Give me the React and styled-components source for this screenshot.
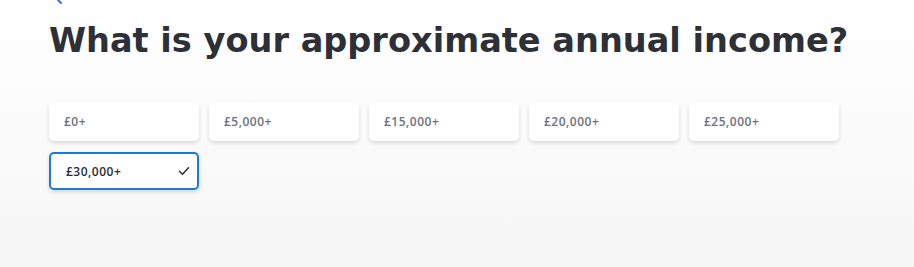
import React from 'react';
import styled, { createGlobalStyle } from 'styled-components';

const GlobalStyle = createGlobalStyle`
  html, body {
    margin: 0;
    padding: 0;
  }
  body {
    background: linear-gradient(180deg, #ffffff 0%, #f6f6f6 100%);
    min-height: 267px;
    font-family: "DejaVu Sans", "Open Sans", sans-serif;
  }
`;

const Page = styled.div`
  position: relative;
  height: 267px;
  padding: 0 49px;
  box-sizing: border-box;
  overflow: hidden;
`;

const BackLink = styled.a`
  position: absolute;
  left: 52px;
  top: -10px;
  color: #3d6af2;
  display: block;
  width: 14px;
  height: 14px;
`;

const Heading = styled.h1`
  margin: 0;
  padding-top: 20px;
  font-size: 33.6px;
  line-height: 42px;
  font-weight: 700;
  color: #2d3036;
  white-space: nowrap;
`;

const Options = styled.div`
  display: grid;
  grid-template-columns: repeat(5, 150px);
  column-gap: 10px;
  row-gap: 11px;
  margin-top: 40px;
`;

const Option = styled.button`
  display: flex;
  align-items: center;
  justify-content: space-between;
  height: ${p => (p.$selected ? '38px' : '39px')};
  padding: 0 ${p => (p.$selected ? '7px' : '9px')} 0 ${p => (p.$selected ? '15px' : '15px')};
  background: #ffffff;
  border: ${p => (p.$selected ? '2px solid #1f78d6' : '0')};
  border-radius: 5px;
  box-shadow: 0 2px 4px rgba(0, 0, 0, 0.14);
  font-family: "Open Sans", sans-serif;
  font-size: 12px;
  letter-spacing: 0.5px;
  font-weight: 600;
  color: ${p => (p.$selected ? '#2a2d33' : '#6d717b')};
  text-align: left;
  cursor: pointer;
`;

const Check = () => (
  <svg width="12" height="10" viewBox="0 0 12 10" fill="none">
    <path d="M1.5 5.2 L4.5 8.2 L10.5 1.8" stroke="#2a2d33" strokeWidth="1.5" strokeLinecap="round" strokeLinejoin="round" />
  </svg>
);

const options = ['£0+', '£5,000+', '£15,000+', '£20,000+', '£25,000+', '£30,000+'];

export default function App() {
  const selected = '£30,000+';
  return (
    <>
      <GlobalStyle />
      <Page>
        <BackLink aria-label="Back">
          <svg width="14" height="14" viewBox="0 0 14 14" fill="none">
            <path d="M9 2 L4 7 L9 12" stroke="currentColor" strokeWidth="2" strokeLinecap="round" strokeLinejoin="round" />
          </svg>
        </BackLink>
        <Heading>What is your approximate annual income?</Heading>
        <Options>
          {options.map(o => (
            <Option key={o} $selected={o === selected}>
              <span>{o}</span>
              {o === selected && <Check />}
            </Option>
          ))}
        </Options>
      </Page>
    </>
  );
}
